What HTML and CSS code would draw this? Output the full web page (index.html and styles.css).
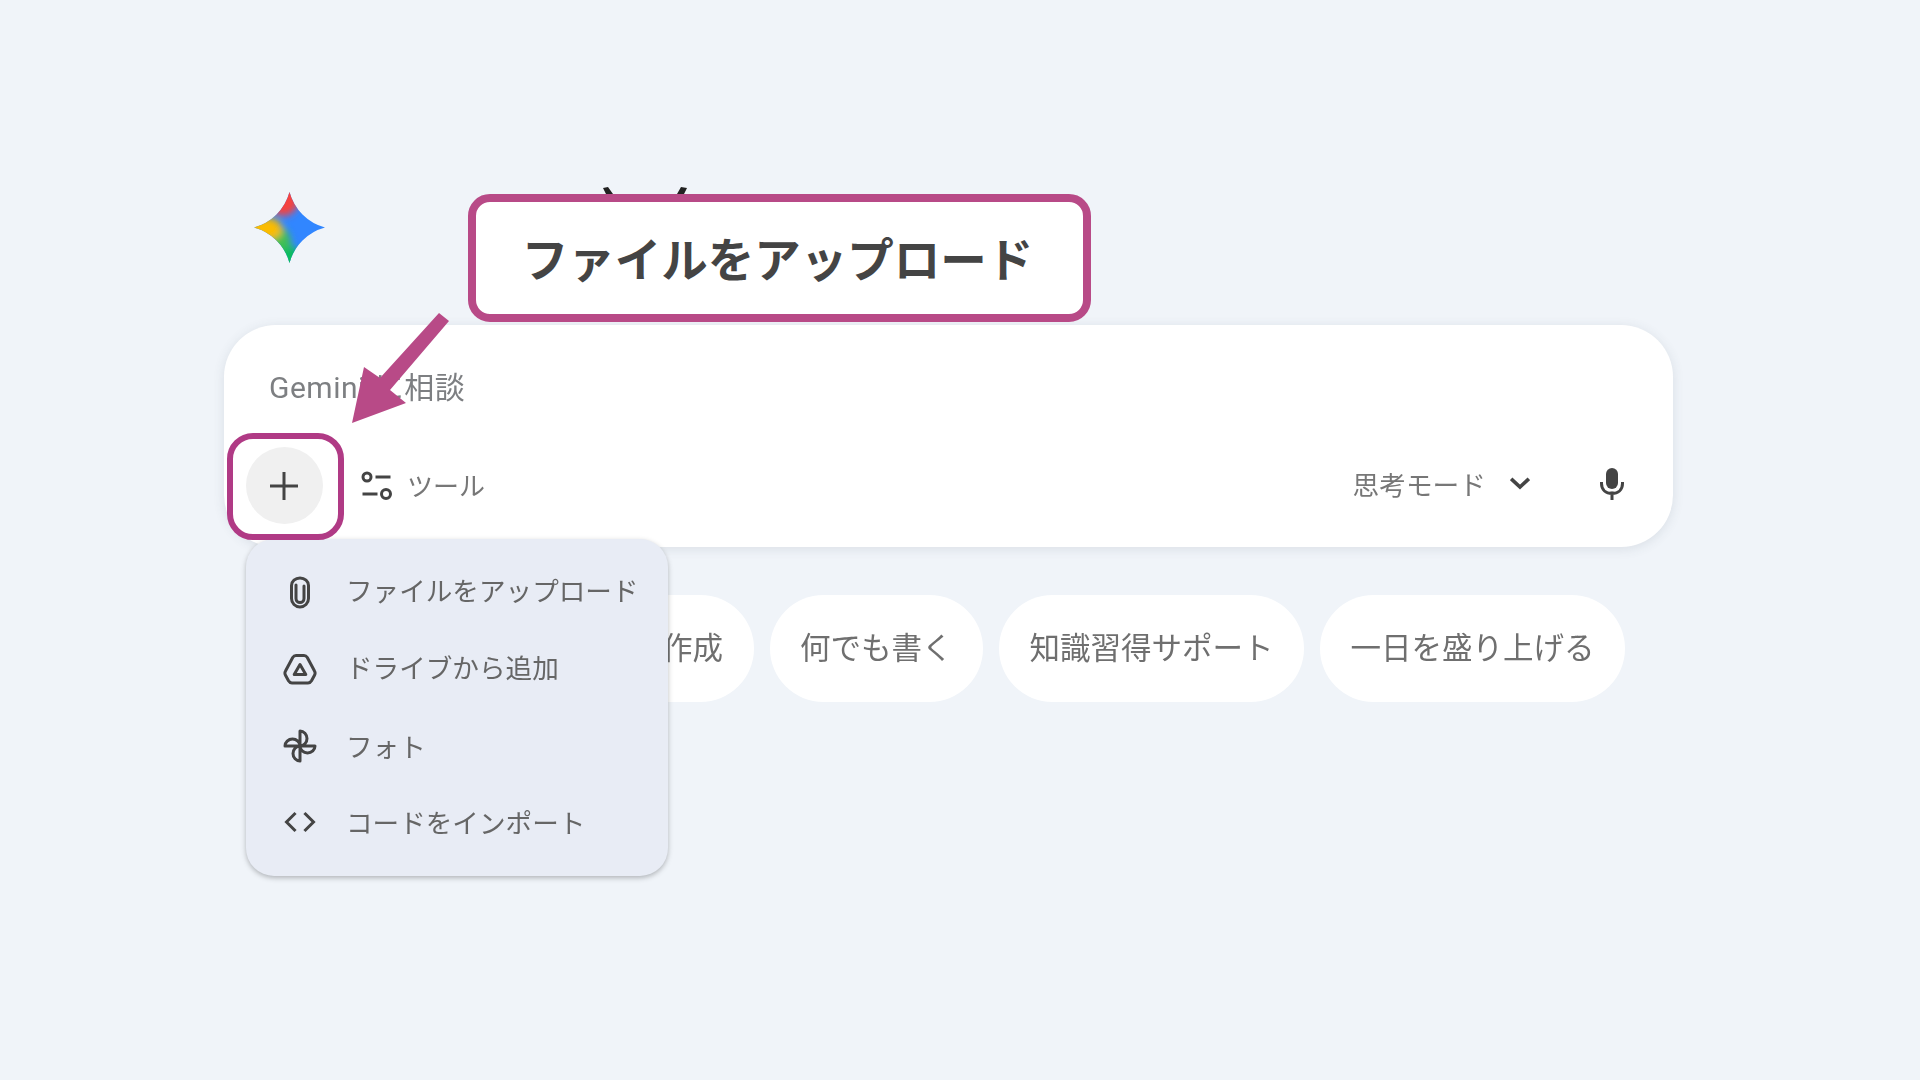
FILE: index.html
```html
<!DOCTYPE html>
<html lang="ja">
<head>
<meta charset="utf-8">
<title>Gemini</title>
<link rel="stylesheet" href="styles.css">
</head>
<body>
<div class="app">
  <div class="star-row">
    <svg class="star" viewBox="0 0 24 24" width="71" height="71" aria-hidden="true">
      <defs>
        <clipPath id="starClip"><path d="M12 24A17 17 0 0 0 0 12 17 17 0 0 0 12 0a17 17 0 0 0 12 12 17 17 0 0 0-12 12Z"/></clipPath>
        <filter id="starBlur" x="-50%" y="-50%" width="200%" height="200%"><feGaussianBlur stdDeviation="1.300"/></filter>
      </defs>
      <g clip-path="url(#starClip)">
        <rect width="24" height="24" fill="#3186ff"/>
        <g filter="url(#starBlur)">
          <ellipse cx="9" cy="18.500" rx="3.600" ry="6.500" fill="#3fbf55"/>
          <ellipse cx="12" cy="23" rx="4.500" ry="4.500" fill="#0ebc5f"/>
          <ellipse cx="4" cy="12.500" rx="5.500" ry="3.800" fill="#fbbc04"/>
          <ellipse cx="10" cy="2.500" rx="5" ry="5.500" fill="#f5423f"/>
        </g>
      </g>
    </svg>
  </div>

  <section class="card">
    <div class="placeholder">Gemini に相談</div>
    <div class="tools-row">
      <button class="plus-btn" aria-label="追加">
        <svg class="plus-icon" width="30" height="30" viewBox="0 0 30 30"><path class="stroke flat" d="M15 1v28M1 15h28"/></svg>
      </button>
      <svg class="tools-icon" width="32" height="30" viewBox="0 0 32 30"><circle class="stroke" cx="6" cy="6" r="4"/><path class="stroke" d="M16 6h12M3 23h12"/><circle class="stroke" cx="25" cy="23" r="4.500"/></svg>
      <span class="tools-label">ツール</span>
      <div class="mode-group">
        <span class="mode-label">思考モード</span>
        <svg class="chev" width="20" height="14" viewBox="0 0 20 14"><path class="stroke heavy" d="M2.500 3l7.500 7 7.500-7"/></svg>
        <svg class="mic" width="24" height="32" viewBox="0 0 24 32"><rect x="6" y="0" width="12" height="21" rx="6" fill="#444"/><path class="stroke" d="M1.500 15.500c0 6.500 4.500 10 10.500 10s10.500-3.500 10.500-10M12 25v6"/></svg>
      </div>
    </div>
  </section>

  <div class="chips">
    <span class="chip">画像を作成</span>
    <span class="chip">何でも書く</span>
    <span class="chip">知識習得サポート</span>
    <span class="chip">一日を盛り上げる</span>
  </div>

  <nav class="menu">
    <div class="menu-item">
      <svg class="menu-icon clip" viewBox="0 0 34 34"><path class="stroke thin" d="M8.500 9.500a8.500 7.500 0 0 1 17 0v13a8.500 8.500 0 0 1-17 0zM21 10v12.500a4 4 0 0 1-8 0V9"/></svg>
      <span>ファイルをアップロード</span>
    </div>
    <div class="menu-item">
      <svg class="menu-icon" viewBox="0 0 34 34"><path class="stroke thin" d="M13 3.500h8c1.500 0 2.500.7 3.300 2L31.500 19c.8 1.400.8 2.800 0 4.200l-3 5.600c-.8 1.400-2 2.200-3.500 2.200H9c-1.500 0-2.700-.8-3.500-2.200l-3-5.600c-.8-1.400-.8-2.800 0-4.200L9.700 5.500c.8-1.300 1.800-2 3.300-2z"/><path class="stroke thin" d="M17 12.500l5.800 10H11.200z"/></svg>
      <span>ドライブから追加</span>
    </div>
    <div class="menu-item low">
      <svg class="menu-icon" viewBox="0 0 34 34"><path class="stroke thin" d="M17 17V2A7 7.500 0 0 1 17 17ZM17 17H32A7.500 7 0 0 1 17 17ZM17 17V32A7 7.500 0 0 1 17 17ZM17 17H2A7.500 7 0 0 1 17 17Z"/></svg>
      <span>フォト</span>
    </div>
    <div class="menu-item low">
      <svg class="menu-icon" viewBox="0 0 34 34"><path class="stroke" d="M11.500 9l-8 8 8 8M22.500 9l8 8-8 8"/></svg>
      <span>コードをインポート</span>
    </div>
  </nav>
</div>

<svg class="heading-tips" width="90" height="10" viewBox="0 0 90 10" aria-hidden="true"><path d="M3 2L8 1 13 8H6ZM81 1L87 2 84 8H77Z" fill="#222"/></svg>
<div class="callout"><span class="callout-text">ファイルをアップロード</span></div>
<div class="plus-frame"></div>
<svg class="arrow" width="120" height="120" viewBox="0 0 120 120" aria-hidden="true"><path d="M100 0L110 8 51 77 67 90 13 110 25 54 41 65Z" fill="#b84a87"/></svg>
</body>
</html>
```

FILE: styles.css
```css
* { box-sizing: border-box; }
html, body { margin: 0; height: 100%; }
body {
  position: relative;
  width: 1920px;
  height: 1080px;
  overflow: hidden;
  background: #f0f4f9;
  font-family: "Noto Sans CJK JP", "Noto Sans", sans-serif;
  color: #777;
}
.app {
  position: relative;
  height: 1080px;
  padding: 192px 247px 0 224px;
  filter: blur(0.7px);
}
.star-row {
  display: flex;
  height: 133px;
  padding-left: 30px;
}
.star { display: block; }
.stroke { fill: none; stroke: #444; stroke-width: 3; stroke-linecap: square; }
.stroke.flat { stroke-linecap: butt; }
.stroke.heavy { stroke-width: 3.600; }
.stroke.thin { stroke-width: 3; stroke-linecap: round; stroke-linejoin: round; }

.card {
  height: 222px;
  padding: 40px 49px 0 22px;
  background: #fff;
  border-radius: 52px;
  box-shadow: 0 2px 12px rgba(60, 70, 90, .12);
}
.placeholder {
  margin-left: 23px;
  font-family: "Roboto", "Noto Sans CJK JP", sans-serif;
  font-size: 30px;
  letter-spacing: .5px;
  line-height: 46px;
  color: #7d7f82;
}
.tools-row {
  display: flex;
  align-items: center;
  margin-top: 36px;
  height: 77px;
}
.plus-btn {
  display: flex;
  align-items: center;
  justify-content: center;
  width: 77px;
  height: 77px;
  padding: 0;
  border: 0;
  border-radius: 50%;
  background: #f0f0f0;
}
.plus-icon { margin-right: 1px; }
.tools-icon { margin-left: 38px; }
.tools-label { margin: 0 0 2px 14px; font-size: 26px; color: #777; }
.mode-group {
  display: flex;
  align-items: center;
  margin-left: auto;
  margin-bottom: 4px;
  font-size: 26.700px;
}
.mode-label { color: #777; margin-bottom: 1px; }
.chev { margin-left: 24px; }
.mic { margin-left: 70px; }

.chips {
  display: flex;
  justify-content: flex-end;
  gap: 16px;
  margin-top: 48px;
  padding-right: 48px;
}
.chip {
  display: flex;
  align-items: center;
  height: 107px;
  padding: 0 30.500px 6px;
  border-radius: 54px;
  background: #fff;
  font-size: 30.500px;
  color: #6f6f6f;
  white-space: nowrap;
}

.menu {
  position: absolute;
  left: 246px;
  top: 539px;
  width: 422px;
  height: 337px;
  padding-top: 15px;
  border-radius: 28px;
  background: #e8ecf5;
  box-shadow: 0 2px 5px rgba(60, 64, 67, .35);
}
.menu-item {
  display: flex;
  align-items: center;
  gap: 29px;
  height: 76.700px;
  padding-left: 37px;
  font-size: 26.600px;
  color: #666;
  white-space: nowrap;
}
.menu-item span { margin-bottom: 5px; }
.menu-item.low span { margin-bottom: 1px; }
.menu-icon { width: 34px; height: 34px; flex: none; }
.menu-icon.clip { margin-top: 2px; }

.heading-tips {
  position: absolute;
  left: 600px;
  top: 186px;
  filter: blur(0.7px);
}
.callout {
  position: absolute;
  left: 468px;
  top: 194px;
  width: 623px;
  height: 128px;
  display: flex;
  align-items: center;
  justify-content: center;
  padding: 0 4px 4px 0;
  border: 8px solid #b84a87;
  border-radius: 22px;
  background: #fff;
  font-size: 46.500px;
  font-weight: 700;
  color: #444;
  white-space: nowrap;
}
.plus-frame {
  position: absolute;
  left: 227px;
  top: 433px;
  width: 117px;
  height: 107px;
  border: 6px solid #b03a85;
  border-radius: 26px;
}
.arrow {
  position: absolute;
  left: 339px;
  top: 313px;
}
```
